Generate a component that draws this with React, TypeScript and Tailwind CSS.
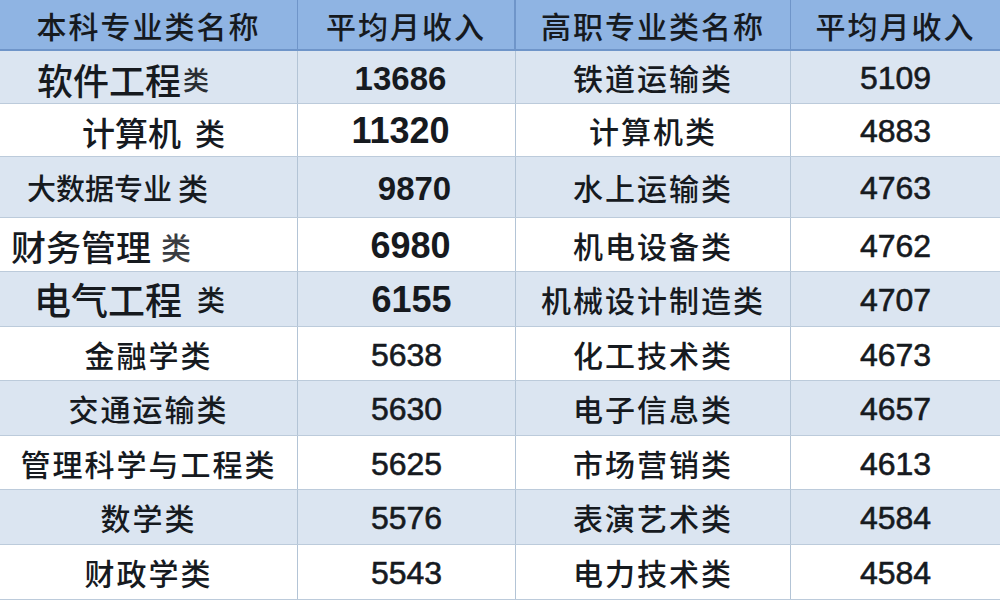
import React from "react";

type LeftCell = {
  main: string;
  suffix?: string;
  mainCls: string;
  suffixCls?: string;
  wrapCls: string;
};

type Row = {
  left: LeftCell;
  income: string;
  incomeCls: string;
  vocational: string;
  vocIncome: string;
  heightCls: string;
  blue: boolean;
};

const ROWS: Row[] = [
  {
    left: { main: "软件工程", suffix: "类", mainCls: "text-[36px]", suffixCls: "text-[26px] ml-[2px] text-[#2a2e33]", wrapCls: "justify-start pl-[37px] pt-[4px]" },
    income: "13686",
    incomeCls: "text-[33px] font-bold -translate-x-[6px]",
    vocational: "铁道运输类",
    vocIncome: "5109",
    heightCls: "h-[53px]",
    blue: true,
  },
  {
    left: { main: "计算机", suffix: "类", mainCls: "text-[33px]", suffixCls: "text-[30px] ml-[14px]", wrapCls: "justify-start pl-[82px] pt-[4px]" },
    income: "11320",
    incomeCls: "text-[36px] font-bold -translate-x-[6px]",
    vocational: "计算机类",
    vocIncome: "4883",
    heightCls: "h-[53px]",
    blue: false,
  },
  {
    left: { main: "大数据专业", suffix: "类", mainCls: "text-[29px]", suffixCls: "text-[30px] ml-[6px]", wrapCls: "justify-start pl-[27px]" },
    income: "9870",
    incomeCls: "text-[33px] font-bold translate-x-[8px]",
    vocational: "水上运输类",
    vocIncome: "4763",
    heightCls: "h-[61px]",
    blue: true,
  },
  {
    left: { main: "财务管理", suffix: "类", mainCls: "text-[35px]", suffixCls: "text-[30px] ml-[10px] text-[#3a3d42]", wrapCls: "justify-start pl-[11px] pt-[2px]" },
    income: "6980",
    incomeCls: "text-[36px] font-bold translate-x-[4px]",
    vocational: "机电设备类",
    vocIncome: "4762",
    heightCls: "h-[54px]",
    blue: false,
  },
  {
    left: { main: "电气工程", suffix: "类", mainCls: "text-[37px]", suffixCls: "text-[28px] ml-[15px]", wrapCls: "justify-start pl-[34px]" },
    income: "6155",
    incomeCls: "text-[36px] font-bold translate-x-[5px]",
    vocational: "机械设计制造类",
    vocIncome: "4707",
    heightCls: "h-[55px]",
    blue: true,
  },
  {
    left: { main: "金融学类", mainCls: "text-[30px] tracking-[2px]", wrapCls: "justify-center" },
    income: "5638",
    incomeCls: "text-[32px] [-webkit-text-stroke:0.6px]",
    vocational: "化工技术类",
    vocIncome: "4673",
    heightCls: "h-[54px]",
    blue: false,
  },
  {
    left: { main: "交通运输类", mainCls: "text-[30px] tracking-[2px]", wrapCls: "justify-center" },
    income: "5630",
    incomeCls: "text-[32px] [-webkit-text-stroke:0.6px]",
    vocational: "电子信息类",
    vocIncome: "4657",
    heightCls: "h-[55px]",
    blue: true,
  },
  {
    left: { main: "管理科学与工程类", mainCls: "text-[30px] tracking-[2px]", wrapCls: "justify-center" },
    income: "5625",
    incomeCls: "text-[32px] [-webkit-text-stroke:0.6px]",
    vocational: "市场营销类",
    vocIncome: "4613",
    heightCls: "h-[54px]",
    blue: false,
  },
  {
    left: { main: "数学类", mainCls: "text-[30px] tracking-[2px]", wrapCls: "justify-center" },
    income: "5576",
    incomeCls: "text-[32px] [-webkit-text-stroke:0.6px]",
    vocational: "表演艺术类",
    vocIncome: "4584",
    heightCls: "h-[55px]",
    blue: true,
  },
  {
    left: { main: "财政学类", mainCls: "text-[30px] tracking-[2px]", wrapCls: "justify-center" },
    income: "5543",
    incomeCls: "text-[32px] [-webkit-text-stroke:0.6px]",
    vocational: "电力技术类",
    vocIncome: "4584",
    heightCls: "h-[55px]",
    blue: false,
  },
];

const CJK = "font-['Noto_Sans_CJK_SC',sans-serif]";
const NUM = "font-['Liberation_Sans','Noto_Sans_CJK_SC',sans-serif]";

export default function App() {
  return (
    <div className="w-[1000px] h-[602px] overflow-hidden bg-white text-[#161a1f]">
      {/* header */}
      <div className="grid grid-cols-[298px_218px_275px_209px] h-[51px] bg-[#8fb4e3] border-b-2 border-[#6f95c9]">
        <div className={`flex items-center justify-center ${CJK} text-[30px] tracking-[2px] leading-none font-medium border-r border-[#6f95c9]`}>
          本科专业类名称
        </div>
        <div className={`flex items-center justify-center ${CJK} text-[30px] tracking-[2px] leading-none font-medium border-r-2 border-[#6f95c9]`}>
          平均月收入
        </div>
        <div className={`flex items-center justify-center ${CJK} text-[30px] tracking-[2px] leading-none font-medium border-r border-[#6f95c9]`}>
          高职专业类名称
        </div>
        <div className={`flex items-center justify-center ${CJK} text-[30px] tracking-[2px] leading-none font-medium`}>
          平均月收入
        </div>
      </div>

      {/* body */}
      {ROWS.map((row, i) => (
        <div
          key={i}
          className={`grid grid-cols-[298px_218px_275px_209px] ${row.heightCls} border-b border-[#bccbdb] ${row.blue ? "bg-[#dbe5f1]" : "bg-white"}`}
        >
          <div className={`flex items-center ${row.left.wrapCls} ${CJK} font-medium leading-none border-r border-[#b3c4d6]`}>
            <span className={row.left.mainCls}>{row.left.main}</span>
            {row.left.suffix && (
              <span className={row.left.suffixCls}>{row.left.suffix}</span>
            )}
          </div>
          <div className={`flex items-center justify-center pt-[2px] ${NUM} leading-none border-r border-[#b3c4d6]`}>
            <span className={row.incomeCls}>{row.income}</span>
          </div>
          <div className={`flex items-center justify-center ${CJK} font-medium text-[30px] tracking-[2px] leading-none border-r border-[#b3c4d6]`}>
            {row.vocational}
          </div>
          <div className={`flex items-center justify-center pt-[2px] ${NUM} text-[32px] leading-none [-webkit-text-stroke:0.6px]`}>
            {row.vocIncome}
          </div>
        </div>
      ))}
    </div>
  );
}
